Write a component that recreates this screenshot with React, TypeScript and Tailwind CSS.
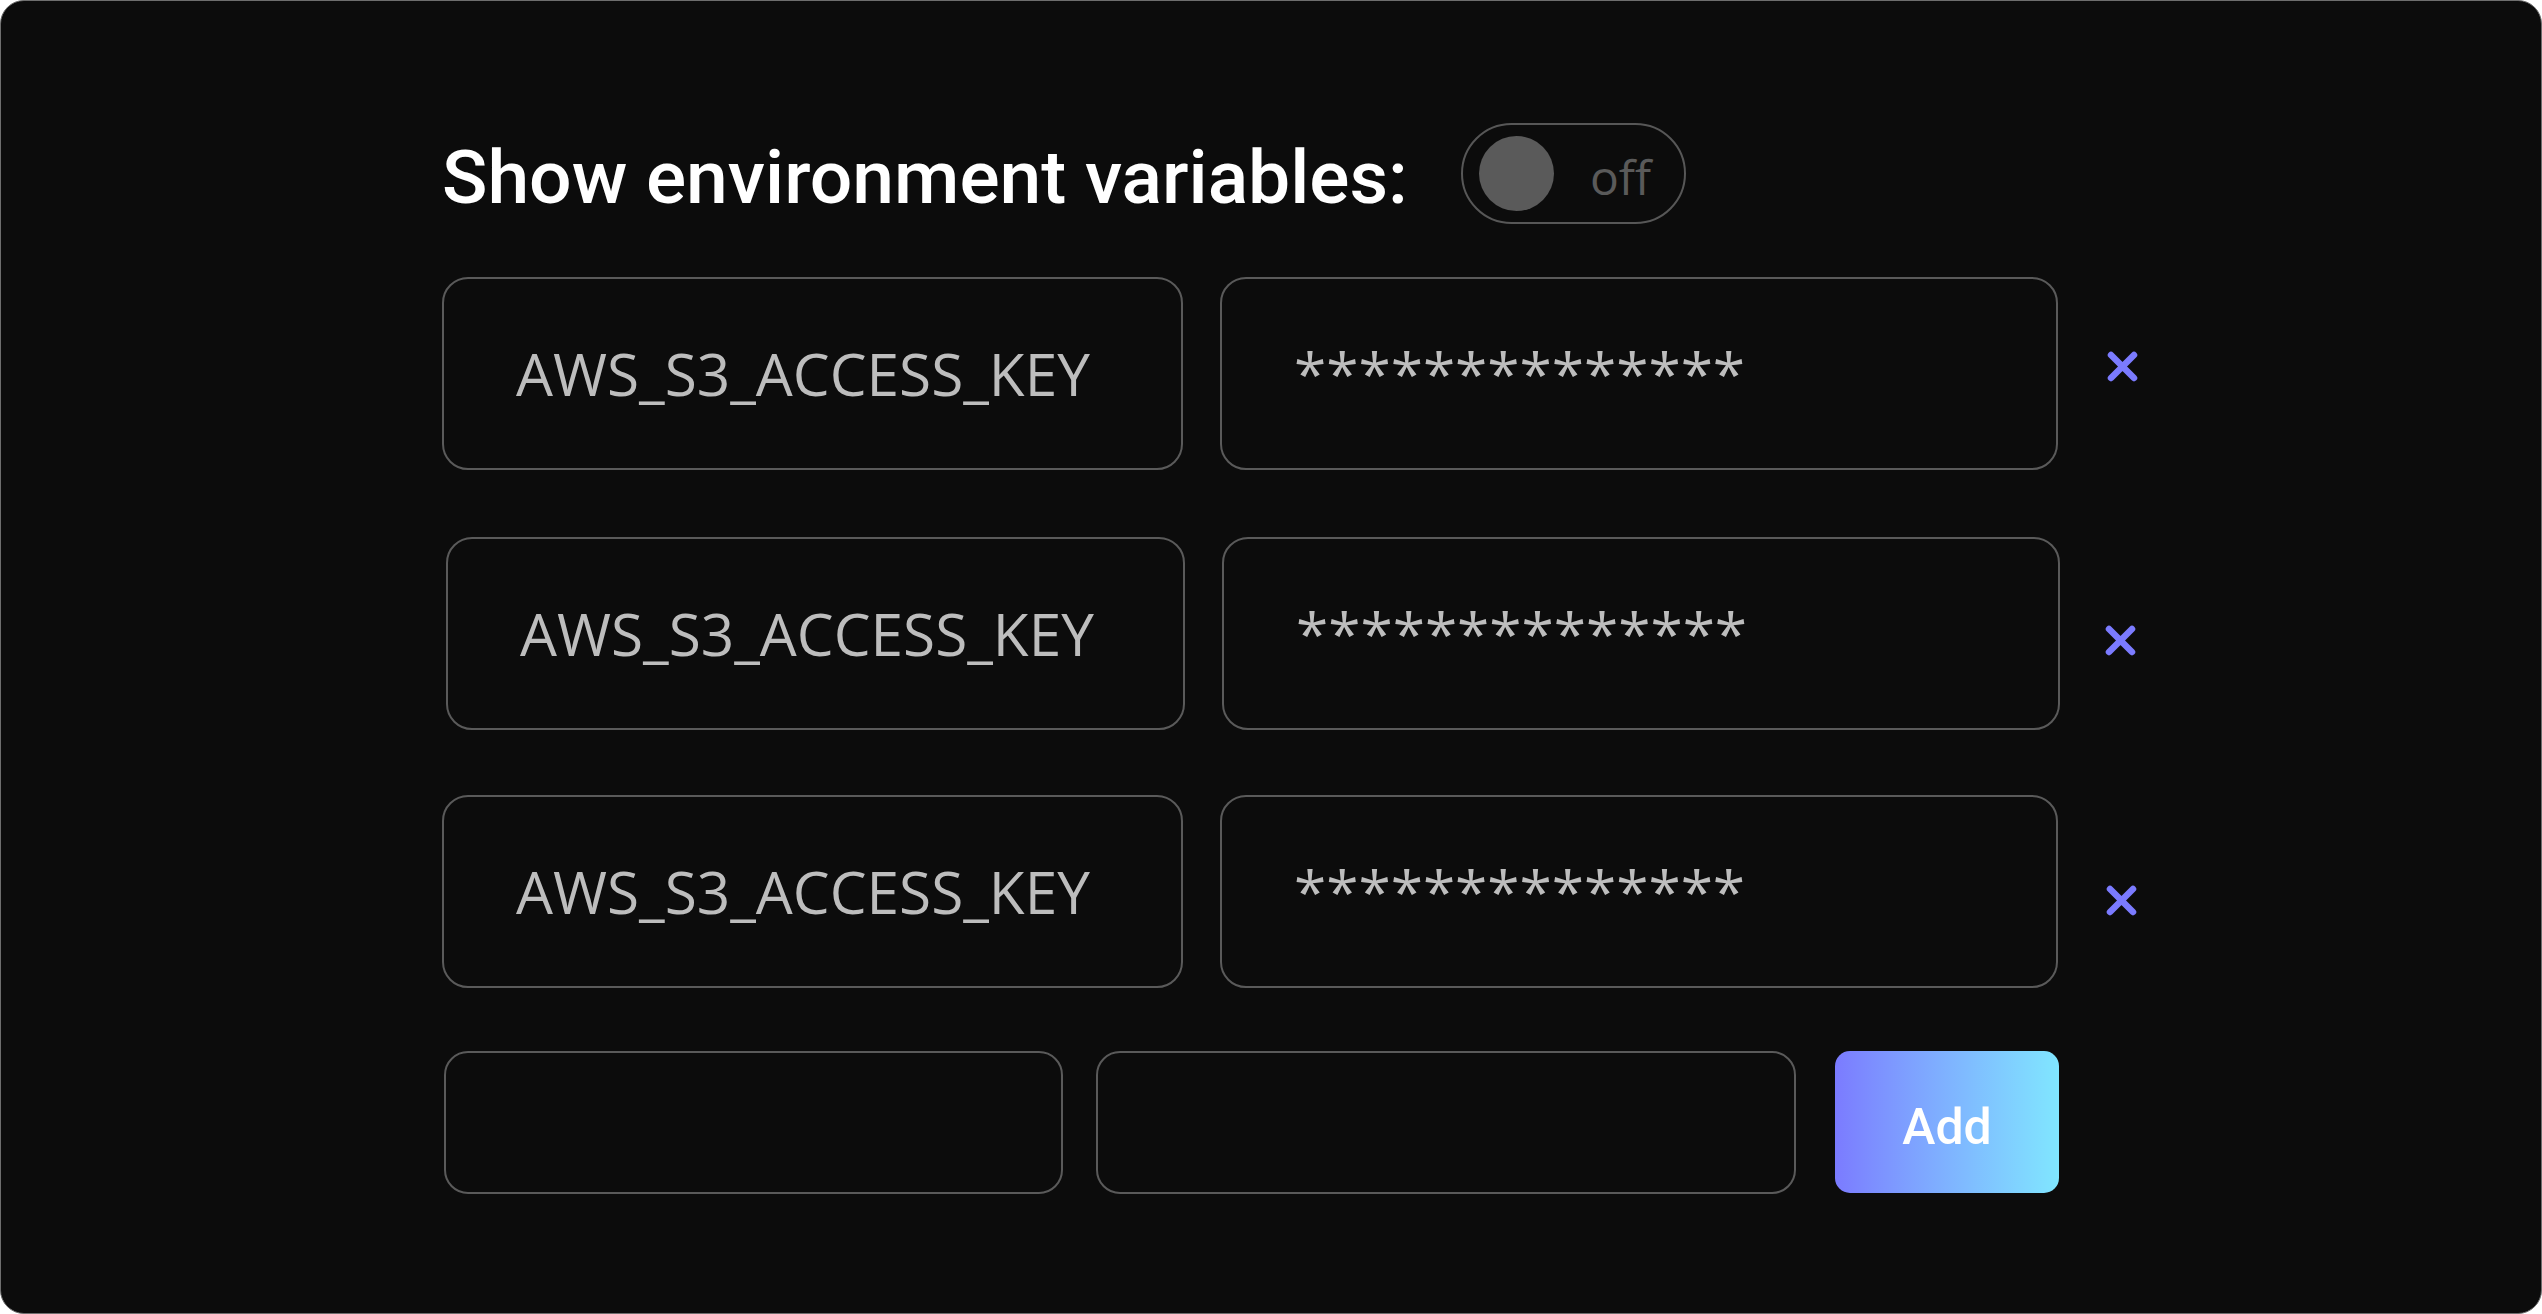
import React from "react";

const XIcon = () => (
  <svg width="31" height="31" viewBox="0 0 31 31" fill="none">
    <path d="M4 4 L27 27 M27 4 L4 27" stroke="#7b7bff" strokeWidth="6.5" strokeLinecap="round" />
  </svg>
);

const Row = ({ keyW, xMt, xMl }: { keyW: string; xMt: string; xMl: string }) => (
  <div className="flex items-start">
    <div className={`${keyW} h-[193px] rounded-[26px] border-2 border-[#5a5a5a] flex items-center pl-[72px]`}>
      <span className="text-[58.5px] text-[#bdbdbd] leading-normal" style={{ fontFamily: '"Open Sans", sans-serif' }}>
        AWS_S3_ACCESS_KEY
      </span>
    </div>
    <div className="ml-[37px] w-[838px] h-[193px] rounded-[26px] border-2 border-[#5a5a5a] flex items-center pl-[72px]">
      <span className="text-[58.5px] text-[#bdbdbd] leading-normal" style={{ fontFamily: '"Open Sans", sans-serif' }}>
        **************
      </span>
    </div>
    <div className={`${xMl} ${xMt} flex`}>
      <XIcon />
    </div>
  </div>
);

export default function App() {
  return (
    <div className="w-[2542px] h-[1314px] bg-white">
      <div className="w-[2542px] h-[1314px] bg-[#0c0c0c] rounded-[24px] border border-[#6e6e6e] pl-[441px] pt-[122px]">
        <div className="flex items-center h-[101px]">
          <h1
            className="text-[75px] font-medium text-white leading-normal mt-[8px]"
            style={{ fontFamily: "Roboto, sans-serif" }}
          >
            Show environment variables:
          </h1>
          <div className="ml-[53px] w-[225px] h-[101px] rounded-full border-2 border-[#575757] flex items-center pl-[16px]">
            <div className="w-[75px] h-[75px] rounded-full bg-[#5a5a5a]" />
            <span
              className="ml-[36px] mt-[6px] text-[48px] text-[#5a5a5a] leading-normal"
              style={{ fontFamily: '"Open Sans", sans-serif' }}
            >
              off
            </span>
          </div>
        </div>

        <div className="mt-[53px]">
          <Row keyW="w-[741px]" xMt="mt-[74px]" xMl="ml-[49px]" />
        </div>
        <div className="mt-[67px] pl-[4px]">
          <Row keyW="w-[739px]" xMt="mt-[88px]" xMl="ml-[45px]" />
        </div>
        <div className="mt-[65px]">
          <Row keyW="w-[741px]" xMt="mt-[90px]" xMl="ml-[48px]" />
        </div>

        <div className="mt-[63px] flex items-start pl-[2px]">
          <div className="w-[619px] h-[143px] rounded-[24px] border-2 border-[#5a5a5a]" />
          <div className="ml-[33px] w-[700px] h-[143px] rounded-[24px] border-2 border-[#5a5a5a]" />
          <button
            className="ml-[39px] w-[224px] h-[142px] rounded-[15px] bg-linear-to-r from-[#7b7bff] to-[#80e6ff] text-white text-[50px] font-medium flex items-center justify-center pt-[10px]"
            style={{ fontFamily: "Roboto, sans-serif" }}
          >
            Add
          </button>
        </div>
      </div>
    </div>
  );
}
